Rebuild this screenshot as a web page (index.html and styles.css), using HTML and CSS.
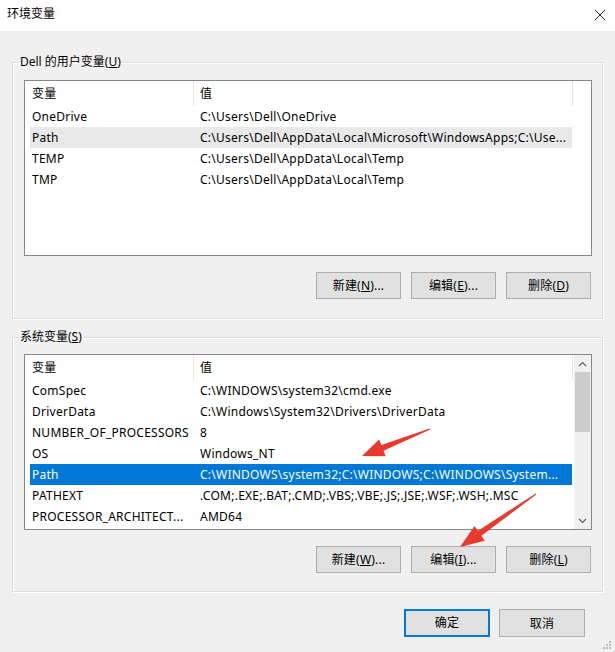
FILE: index.html
```html
<!DOCTYPE html>
<html lang="zh-CN">
<head>
<meta charset="utf-8">
<title>环境变量</title>
<link rel="stylesheet" href="styles.css">
</head>
<body>
<div class="dialog">
  <div class="titlebar">
    <span class="title">环境变量</span>
    <svg class="close" width="12" height="12" viewBox="0 0 12 12"><path d="M1 1 L11 11 M11 1 L1 11" stroke="#222" stroke-width="1" fill="none"/></svg>
  </div>

  <fieldset class="group group-user">
    <legend>Dell 的用户变量(<u>U</u>)</legend>
    <div class="listbox">
      <div class="lv">
        <div class="lv-head"><div class="h1">变量</div><div class="h2">值</div></div>
        <div class="row"><div class="c1">OneDrive</div><div class="c2">C:\Users\Dell\OneDrive</div></div>
        <div class="row sel-inactive"><div class="c1">Path</div><div class="c2">C:\Users\Dell\AppData\Local\Microsoft\WindowsApps;C:\Use...</div></div>
        <div class="row"><div class="c1">TEMP</div><div class="c2">C:\Users\Dell\AppData\Local\Temp</div></div>
        <div class="row"><div class="c1">TMP</div><div class="c2">C:\Users\Dell\AppData\Local\Temp</div></div>
      </div>
    </div>
    <div class="btnrow">
      <button class="btn">新建(<u>N</u>)...</button>
      <button class="btn">编辑(<u>E</u>)...</button>
      <button class="btn">删除(<u>D</u>)</button>
    </div>
  </fieldset>

  <fieldset class="group group-sys">
    <legend>系统变量(<u>S</u>)</legend>
    <div class="listbox">
      <div class="lv">
        <div class="lv-head"><div class="h1">变量</div><div class="h2">值</div></div>
        <div class="row"><div class="c1">ComSpec</div><div class="c2">C:\WINDOWS\system32\cmd.exe</div></div>
        <div class="row"><div class="c1">DriverData</div><div class="c2">C:\Windows\System32\Drivers\DriverData</div></div>
        <div class="row"><div class="c1">NUMBER_OF_PROCESSORS</div><div class="c2">8</div></div>
        <div class="row"><div class="c1">OS</div><div class="c2">Windows_NT</div></div>
        <div class="row sel"><div class="c1">Path</div><div class="c2">C:\WINDOWS\system32;C:\WINDOWS;C:\WINDOWS\System...</div></div>
        <div class="row"><div class="c1">PATHEXT</div><div class="c2">.COM;.EXE;.BAT;.CMD;.VBS;.VBE;.JS;.JSE;.WSF;.WSH;.MSC</div></div>
        <div class="row"><div class="c1">PROCESSOR_ARCHITECT...</div><div class="c2">AMD64</div></div>
      </div>
      <div class="vscroll">
        <div class="sb-btn"><svg width="9" height="6" viewBox="0 0 9 6"><path d="M1 5 L4.5 1.5 L8 5" stroke="#606060" stroke-width="1.2" fill="none"/></svg></div>
        <div class="sb-track"><div class="sb-thumb"></div></div>
        <div class="sb-btn"><svg width="9" height="6" viewBox="0 0 9 6"><path d="M1 1 L4.5 4.5 L8 1" stroke="#606060" stroke-width="1.2" fill="none"/></svg></div>
      </div>
    </div>
    <div class="btnrow">
      <button class="btn">新建(<u>W</u>)...</button>
      <button class="btn">编辑(<u>I</u>)...</button>
      <button class="btn">删除(<u>L</u>)</button>
    </div>
  </fieldset>

  <div class="dlg-buttons">
    <button class="btn btn-default">确定</button>
    <button class="btn">取消</button>
  </div>

  <svg class="grip" width="10" height="10" viewBox="0 0 10 10">
    <rect x="7" y="1" width="2" height="2" fill="#bdbdbd"/>
    <rect x="4" y="4" width="2" height="2" fill="#bdbdbd"/>
    <rect x="7" y="4" width="2" height="2" fill="#bdbdbd"/>
    <rect x="1" y="7" width="2" height="2" fill="#bdbdbd"/>
    <rect x="4" y="7" width="2" height="2" fill="#bdbdbd"/>
    <rect x="7" y="7" width="2" height="2" fill="#bdbdbd"/>
  </svg>

  <svg class="annot" width="615" height="652" viewBox="0 0 615 652">
    <polygon fill="#e8392f" points="429.8,428.5 381.3,445.1 379.1,439.5 362,456 385.7,456.3 383.5,450.7 430.2,429.5"/>
    <polygon fill="#e8392f" points="535.7,493.5 478.0,530.8 474.5,525.9 460,547 484.8,540.7 481.4,535.8 536.3,494.5"/>
  </svg>
</div>
</body>
</html>
```

FILE: styles.css
```css
* { box-sizing: border-box; }

html, body {
  margin: 0;
  padding: 0;
  background: #f0f0f0;
}

body {
  font-family: "Noto Sans", "Noto Sans CJK SC", sans-serif;
  font-size: 12px;
  color: #000;
}

.dialog {
  position: relative;
  width: 615px;
  height: 652px;
  background: #f0f0f0;
  overflow: hidden;
}

.titlebar {
  height: 31px;
  background: #fff;
  display: flex;
  align-items: center;
  justify-content: space-between;
  padding: 0 9px 4px 7px;
}

.title {
  font-size: 12px;
  line-height: 16px;
}

.close { display: block; margin-top: 2px; }

.group {
  margin: 0 12px;
  border: 1px solid #dcdcdc;
  box-shadow: inset 1px 1px 0 #fff, 1px 1px 0 #fff;
  min-width: 0;
}

.group-user {
  margin-top: 23px;
  padding: 10px 10px 19px 11px;
}

.group-sys {
  margin-top: 10px;
  padding: 9px 10px 18px 11px;
}

.group legend {
  padding: 0 2px;
  margin-left: -6px;
  line-height: 16px;
  font-size: 12px;
}

.listbox {
  width: 568px;
  height: 176px;
  border: 1px solid #828790;
  background: #fff;
  display: flex;
  letter-spacing: 0.25px;
}

.lv {
  flex: 1;
  min-width: 0;
}

.lv-head {
  display: flex;
  height: 25px;
  align-items: stretch;
  line-height: 25px;
}

.h1 {
  width: 169px;
  padding-left: 7px;
  border-right: 1px solid #e5e5e5;
}

.h2 {
  width: 379px;
  padding-left: 6px;
  border-right: 1px solid #e5e5e5;
}

.row {
  display: flex;
  height: 21px;
  line-height: 21px;
  margin-left: 5px;
  width: 542px;
  white-space: nowrap;
}

.row .c1 {
  width: 163px;
  padding-left: 2px;
  overflow: hidden;
}

.row .c2 {
  flex: 1;
  padding-left: 7px;
  overflow: hidden;
}

.row.sel-inactive { background: #e9e9e9; }
.row.sel { background: #0078d7; color: #fff; }

.vscroll {
  width: 17px;
  background: #f0f0f0;
  display: flex;
  flex-direction: column;
}

.sb-btn {
  height: 17px;
  display: flex;
  align-items: center;
  justify-content: center;
}

.sb-track {
  flex: 1;
  padding: 0 1px;
}

.sb-thumb {
  height: 60px;
  background: #cdcdcd;
}

.btnrow {
  display: flex;
  justify-content: flex-end;
  gap: 10px;
  margin-top: 16px;
  padding-right: 1px;
}

.btn {
  width: 85px;
  height: 27px;
  margin: 0;
  padding: 0;
  background: #e1e1e1;
  border: 1px solid #adadad;
  font-family: "Noto Sans", "Noto Sans CJK SC", sans-serif;
  font-size: 12px;
  color: #000;
  line-height: 25px;
  letter-spacing: 0.2px;
}

.dlg-buttons {
  display: flex;
  justify-content: flex-end;
  gap: 9px;
  margin-top: 17px;
  padding-right: 30px;
}

.dlg-buttons .btn {
  width: 86px;
  height: 28px;
}

.btn-default {
  border: 2px solid #0078d7;
  line-height: 24px;
}

.grip {
  position: absolute;
  right: 3px;
  bottom: 2px;
}

.annot {
  position: absolute;
  left: 0;
  top: 0;
  pointer-events: none;
}
```
